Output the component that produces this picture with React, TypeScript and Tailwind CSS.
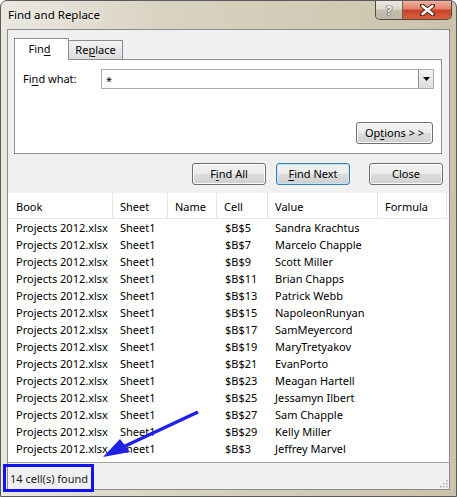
import React from 'react';

const rows: [string, string][] = [
  ['$B$5', 'Sandra Krachtus'],
  ['$B$7', 'Marcelo Chapple'],
  ['$B$9', 'Scott Miller'],
  ['$B$11', 'Brian Chapps'],
  ['$B$13', 'Patrick Webb'],
  ['$B$15', 'NapoleonRunyan'],
  ['$B$17', 'SamMeyercord'],
  ['$B$19', 'MaryTretyakov'],
  ['$B$21', 'EvanPorto'],
  ['$B$23', 'Meagan Hartell'],
  ['$B$25', 'Jessamyn Ilbert'],
  ['$B$27', 'Sam Chapple'],
  ['$B$29', 'Kelly Miller'],
  ['$B$3', 'Jeffrey Marvel'],
];

const cols = 'grid grid-cols-[105px_55px_49px_51px_110px_69px_1fr]';

function Btn({ children, focused, w = 'w-[74px]' }: { children: React.ReactNode; focused?: boolean; w?: string }) {
  return (
    <div
      className={`${w} h-[22px] rounded-[3px] border flex items-center justify-center bg-[linear-gradient(#f2f2f2_0%,#ebebeb_50%,#dddddd_50%,#cfcfcf_100%)] ${
        focused ? 'border-[#3c7fb1] shadow-[inset_0_0_0_1px_#bfe4f8]' : 'border-[#707070] shadow-[inset_0_0_0_1px_#fbfbfb]'
      }`}
    >
      {children}
    </div>
  );
}

function U({ children }: { children: React.ReactNode }) {
  return <span className="underline underline-offset-[2px]">{children}</span>;
}

export default function App() {
  return (
    <div
      className="relative w-[457px] h-[497px] overflow-hidden bg-white text-[11px] text-black whitespace-nowrap"
      style={{ fontFamily: '"Noto Sans", "Open Sans", sans-serif' }}
    >
      <div className="w-full h-full flex flex-col rounded-t-[7px] border border-[#5a5a5a] bg-[linear-gradient(to_right,#ebe8e0_0%,#d9d3c2_35%,#cbc3ab_100%)]">
        {/* title bar */}
        <div className="h-[28px] flex items-start shrink-0">
          <div className="h-full flex items-center pl-[7px] text-[11.5px] [text-shadow:0_0_6px_#ffffff]">Find and Replace</div>
          <div className="ml-auto mr-[4px] flex h-[19px] rounded-b-[5px] border border-t-0 border-[#4f4a40] overflow-hidden">
            <div className="w-[27px] h-full flex items-center justify-center border-r border-[#6b655a] bg-[linear-gradient(#ece9e2_0%,#dcd8cd_45%,#c5bfb0_50%,#bdb6a5_100%)]">
              <span className="text-white font-bold text-[13px] leading-none [text-shadow:0_0_1px_#333,0_0_1px_#333,0_0_1px_#333]">?</span>
            </div>
            <div className="w-[48px] h-full flex items-center justify-center bg-[linear-gradient(#eeb09e_0%,#e0826a_45%,#c94127_50%,#d9603f_100%)]">
              <svg width="15" height="12" viewBox="0 0 15 12">
                <path d="M2 1.5 L13 10.5 M13 1.5 L2 10.5" stroke="#5a2418" strokeWidth="4.5" strokeLinecap="round" />
                <path d="M2.5 2 L12.5 10 M12.5 2 L2.5 10" stroke="#ffffff" strokeWidth="2.6" strokeLinecap="round" />
              </svg>
            </div>
          </div>
        </div>

        {/* client */}
        <div className="flex-1 flex flex-col mx-[6px] mb-[6px] border border-[#8c8c8c] bg-[#f0f0f0]">
          {/* tabs */}
          <div className="flex items-end pl-[6px] pt-[7px] h-[29px]">
            <div className="relative z-10 w-[55px] h-[22px] -mb-px bg-white border border-b-0 border-[#898c95] flex items-center justify-center pr-[4px]">
              Fin<U>d</U>
            </div>
            <div className="w-[54px] h-[19px] border border-l-0 border-b-0 border-[#898c95] bg-[linear-gradient(#f3f3f3,#dcdcdc)] flex items-center justify-center">
              Re<U>p</U>lace
            </div>
          </div>
          <div className="ml-[6px] mr-[7px] h-[95px] border border-[#898c95] bg-white flex flex-col pt-[9px] pl-[8px] pr-[7px]">
            <div className="flex items-center h-[20px]">
              <div className="w-[78px]">
                Fi<U>n</U>d what:
              </div>
              <div className="flex-1 h-[20px] border border-[#abadb3] flex items-center">
                <span className="pl-[4px] pt-[4px] flex-1">*</span>
                <div className="w-[15px] h-[18px] border-l border-[#8f8f8f] bg-[linear-gradient(#f4f4f4,#dcdcdc)] flex items-center justify-center">
                  <svg width="7" height="4" viewBox="0 0 7 4">
                    <path d="M0 0 H7 L3.5 4 Z" fill="#000" />
                  </svg>
                </div>
              </div>
            </div>
            <div className="mt-[33px] flex justify-end pr-[1px]">
              <Btn w="w-[77px]">
                Op<U>t</U>ions &gt; &gt;
              </Btn>
            </div>
          </div>

          {/* action buttons */}
          <div className="flex justify-end pr-[6px] mt-[9px]">
            <Btn>
              F<U>i</U>nd All
            </Btn>
            <div className="ml-[10px]">
              <Btn focused>
                <U>F</U>ind Next
              </Btn>
            </div>
            <div className="ml-[19px]">
              <Btn>Close</Btn>
            </div>
          </div>

          {/* results list */}
          <div className="mt-[8px] flex-1 bg-white border-b border-[#a0a0a0] flex flex-col">
            <div className={`${cols} h-[26px] border-b border-[#e5e5e5]`}>
              {['Book', 'Sheet', 'Name', 'Cell', 'Value', 'Formula'].map((h, i) => (
                <div key={h} className={`flex items-center pt-[3px] border-r border-[#e5e5e5] ${i === 0 ? 'pl-[8px]' : 'pl-[7px]'}`}>
                  {h}
                </div>
              ))}
              <div />
            </div>
            <div className="pt-[1px]">
              {rows.map(([cell, val]) => (
                <div key={cell} className={`${cols} h-[17px] items-center`}>
                  <div className="pl-[8px]">Projects 2012.xlsx</div>
                  <div className="pl-[7px]">Sheet1</div>
                  <div />
                  <div className="pl-[8px]">{cell}</div>
                  <div className="pl-[7px]">{val}</div>
                  <div />
                  <div />
                </div>
              ))}
            </div>
          </div>

          {/* status bar */}
          <div className="h-[26px] shrink-0 flex items-end pb-[2px] pl-[2px] text-[#1e1e1e] relative">
            <span>14 cell(s) found</span>
            <svg className="absolute right-[1px] bottom-[1px]" width="10" height="10" viewBox="0 0 10 10">
              {[
                [8, 2],
                [8, 5],
                [5, 5],
                [8, 8],
                [5, 8],
                [2, 8],
              ].map(([x, y]) => (
                <rect key={`${x}-${y}`} x={x} y={y} width="1.5" height="1.5" fill="#a9a9a9" />
              ))}
            </svg>
          </div>
        </div>
      </div>

      {/* annotations */}
      <div className="absolute left-[3px] top-[464px] w-[91px] h-[28px] border-[3px] border-[#1212f2]" />
      <svg className="absolute left-0 top-0 pointer-events-none" width="457" height="497" viewBox="0 0 457 497">
        <line x1="198" y1="412" x2="123" y2="447" stroke="#2020e6" strokeWidth="3.5" />
        <polygon points="103,457 120,439 130,452" fill="#2020e6" />
      </svg>
    </div>
  );
}
